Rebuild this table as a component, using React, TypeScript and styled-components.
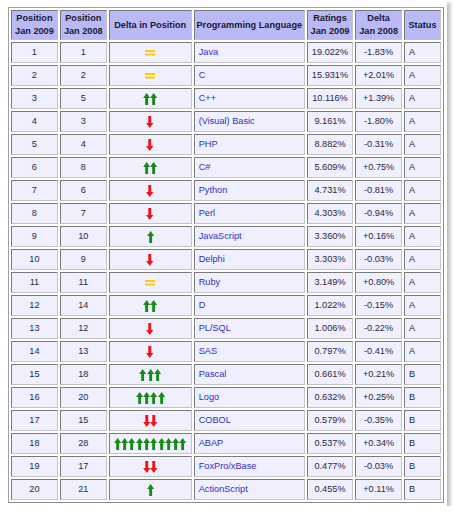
import React from "react";
import styled, { createGlobalStyle } from "styled-components";

const GlobalStyle = createGlobalStyle`
  html, body { margin: 0; padding: 0; background: #ffffff; }
  body { font-family: "Liberation Sans", Arial, sans-serif; }
`;

const Frame = styled.div`
  width: 447px;
  box-sizing: border-box;
  padding: 7px 3px 3px 8px;
  background: #ffffff;
  box-shadow: 3px 3px 4px rgba(0, 0, 0, 0.28);
`;

const Table = styled.table`
  table-layout: fixed;
  border-collapse: separate;
  border-spacing: 2px;
  border: 1px solid #8a8a8a;
  border-top-color: #a0a0a0;
  border-left-color: #a0a0a0;
  background: #ffffff;
  font-family: "Liberation Sans", Arial, sans-serif;
  font-size: 9.2px;
`;

const HeadCell = styled.th<{ $w: number }>`
  box-sizing: border-box;
  width: ${(p) => p.$w}px;
  padding: 1px 1px;
  line-height: 13px;
  background: #b9b9f6;
  color: #1a1a33;
  font-weight: bold;
  text-align: center;
  vertical-align: middle;
  border: 1px solid;
  border-color: #7a7a7a #c4c4c4 #c4c4c4 #7a7a7a;
`;

const Cell = styled.td<{ $align?: "left" | "center" }>`
  box-sizing: border-box;
  padding: 3px 4px;
  line-height: 13px;
  height: 21px;
  background: #efeffe;
  color: #2a2a3e;
  text-align: ${(p) => p.$align ?? "center"};
  vertical-align: middle;
  white-space: nowrap;
  border: 1px solid;
  border-color: #7a7a7a #c4c4c4 #c4c4c4 #7a7a7a;
`;

const LangLink = styled.a`
  color: #2f2fbf;
  text-decoration: none;
`;

const Arrows = styled.div`
  display: flex;
  justify-content: center;
  align-items: center;
  height: 13px;
`;

const UpArrow = () => (
  <svg width="7.3" height="12" viewBox="0 0 7.3 12">
    <polygon points="3.65,0 7.2,5 5.1,5 5.1,12 2.2,12 2.2,5 0.1,5" fill="#168a16" />
  </svg>
);

const DownArrow = () => (
  <svg width="7.5" height="12" viewBox="0 0 7.5 12">
    <polygon points="2.3,0 5.2,0 5.2,7 7.4,7 3.75,12 0.1,7 2.3,7" fill="#f01414" />
  </svg>
);

const Equal = () => (
  <svg width="10" height="6" viewBox="0 0 10 6">
    <rect x="0" y="0" width="10" height="2" fill="#ffcc00" />
    <rect x="0" y="3.5" width="10" height="2" fill="#ffcc00" />
  </svg>
);

type Row = [number, number, string, string, string, string, string];

const rows: Row[] = [
  [1, 1, "=", "Java", "19.022%", "-1.83%", "A"],
  [2, 2, "=", "C", "15.931%", "+2.01%", "A"],
  [3, 5, "u2", "C++", "10.116%", "+1.39%", "A"],
  [4, 3, "d1", "(Visual) Basic", "9.161%", "-1.80%", "A"],
  [5, 4, "d1", "PHP", "8.882%", "-0.31%", "A"],
  [6, 8, "u2", "C#", "5.609%", "+0.75%", "A"],
  [7, 6, "d1", "Python", "4.731%", "-0.81%", "A"],
  [8, 7, "d1", "Perl", "4.303%", "-0.94%", "A"],
  [9, 10, "u1", "JavaScript", "3.360%", "+0.16%", "A"],
  [10, 9, "d1", "Delphi", "3.303%", "-0.03%", "A"],
  [11, 11, "=", "Ruby", "3.149%", "+0.80%", "A"],
  [12, 14, "u2", "D", "1.022%", "-0.15%", "A"],
  [13, 12, "d1", "PL/SQL", "1.006%", "-0.22%", "A"],
  [14, 13, "d1", "SAS", "0.797%", "-0.41%", "A"],
  [15, 18, "u3", "Pascal", "0.661%", "+0.21%", "B"],
  [16, 20, "u4", "Logo", "0.632%", "+0.25%", "B"],
  [17, 15, "d2", "COBOL", "0.579%", "-0.35%", "B"],
  [18, 28, "u10", "ABAP", "0.537%", "+0.34%", "B"],
  [19, 17, "d2", "FoxPro/xBase", "0.477%", "-0.03%", "B"],
  [20, 21, "u1", "ActionScript", "0.455%", "+0.11%", "B"],
];

const Delta = ({ code }: { code: string }) => {
  if (code === "=") {
    return (
      <Arrows>
        <Equal />
      </Arrows>
    );
  }
  const n = parseInt(code.slice(1), 10);
  const items = Array.from({ length: n }, (_, i) =>
    code[0] === "u" ? <UpArrow key={i} /> : <DownArrow key={i} />
  );
  return <Arrows>{items}</Arrows>;
};

export default function App() {
  return (
    <>
      <GlobalStyle />
      <Frame>
        <Table>
          <thead>
            <tr>
              <HeadCell $w={47}>
                Position
                <br />
                Jan 2009
              </HeadCell>
              <HeadCell $w={47}>
                Position
                <br />
                Jan 2008
              </HeadCell>
              <HeadCell $w={83}>Delta in Position</HeadCell>
              <HeadCell $w={112}>Programming Language</HeadCell>
              <HeadCell $w={45}>
                Ratings
                <br />
                Jan 2009
              </HeadCell>
              <HeadCell $w={47}>
                Delta
                <br />
                Jan 2008
              </HeadCell>
              <HeadCell $w={37}>Status</HeadCell>
            </tr>
          </thead>
          <tbody>
            {rows.map((r) => (
              <tr key={r[0]}>
                <Cell>{r[0]}</Cell>
                <Cell>{r[1]}</Cell>
                <Cell>
                  <Delta code={r[2]} />
                </Cell>
                <Cell $align="left">
                  <LangLink href="#">{r[3]}</LangLink>
                </Cell>
                <Cell>{r[4]}</Cell>
                <Cell>{r[5]}</Cell>
                <Cell $align="left">{r[6]}</Cell>
              </tr>
            ))}
          </tbody>
        </Table>
      </Frame>
    </>
  );
}
